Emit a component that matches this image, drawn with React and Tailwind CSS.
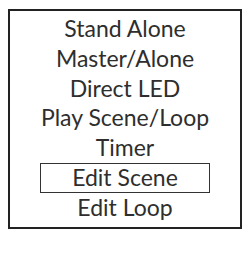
export default function App() {
  const items = ["Stand Alone", "Master/Alone", "Direct LED", "Play Scene/Loop", "Timer"];
  return (
    <div className="w-[248px] h-[265px] bg-white pt-[9px] pl-[8px]" style={{ fontFamily: 'Lato, sans-serif' }}>
      <div className="w-[234px] h-[220px] border-[2.5px] border-[#222] flex flex-col items-center pt-[3px] text-[23px] leading-[29.8px] font-normal text-[#2e2e2e]">
        {items.map((t) => (
          <div key={t}>{t}</div>
        ))}
        <div className="w-[170px] h-[30px] border-[1.5px] border-[#333] flex items-center justify-center">Edit Scene</div>
        <div>Edit Loop</div>
      </div>
    </div>
  );
}
